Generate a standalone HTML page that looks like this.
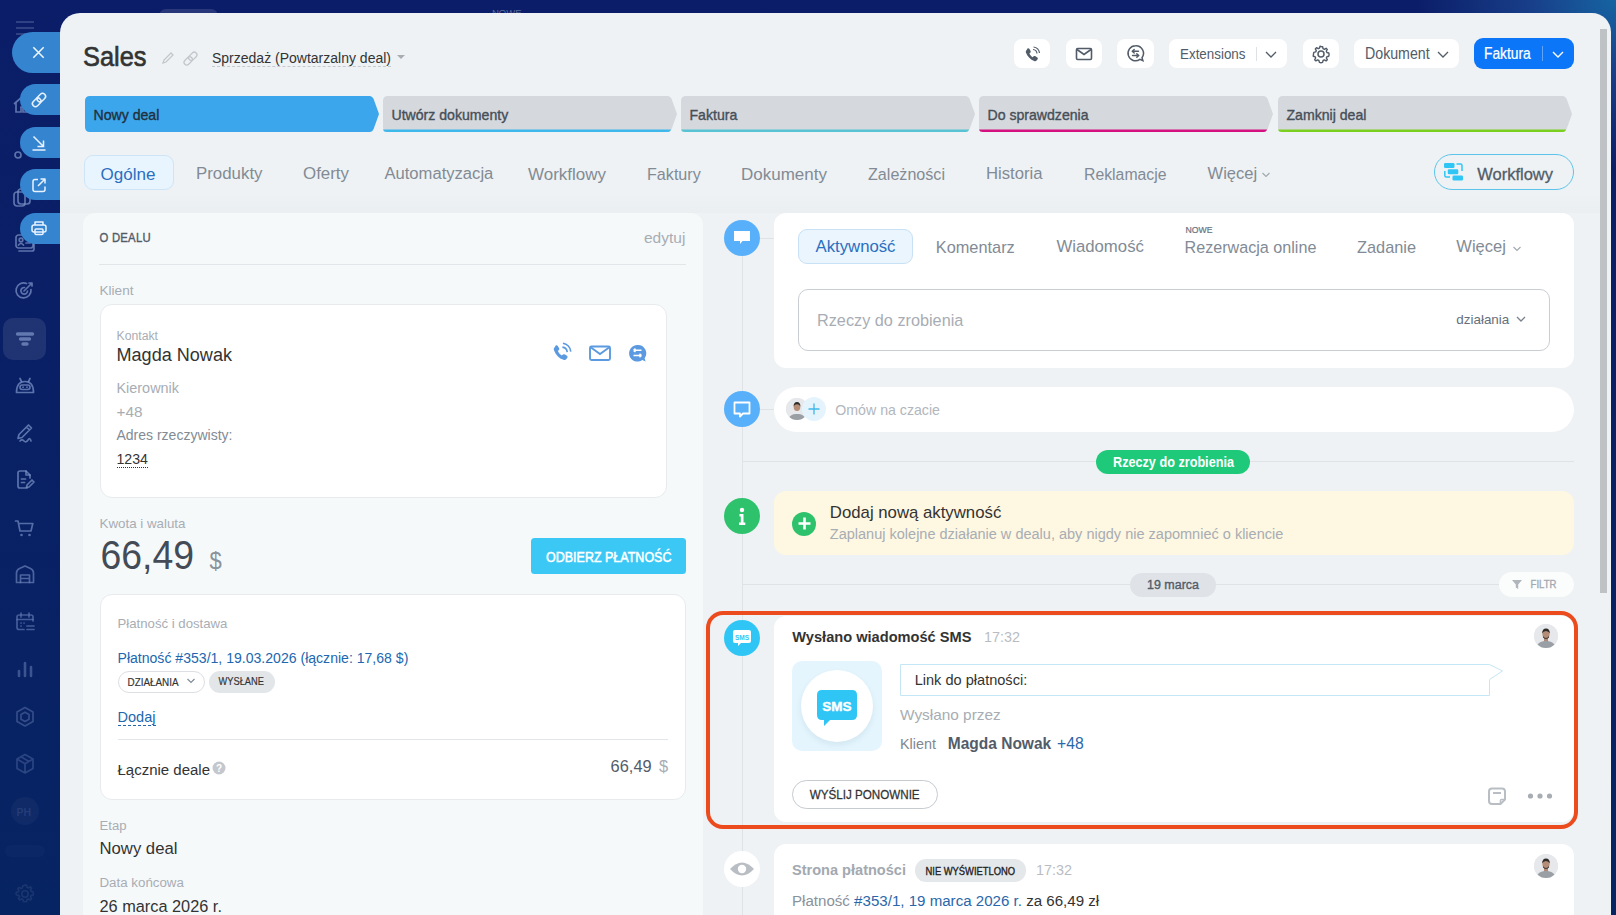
<!DOCTYPE html>
<html><head><meta charset="utf-8"><style>
*{box-sizing:border-box;margin:0;padding:0}
html,body{width:1616px;height:915px;overflow:hidden}
body{position:relative;font-family:"Liberation Sans",sans-serif;background:radial-gradient(ellipse 200px 170px at 1616px 0px,#1664a2 0%,#183d88 45%,rgba(20,40,120,0) 100%),linear-gradient(180deg,#0b1d68 0%,#072462 100%)}
.t{position:absolute;white-space:pre;line-height:1}
.r{position:absolute}
</style></head><body>

<svg class="r" style="left:12px;top:18px;" width="28" height="20" viewBox="0 0 28 20"><g stroke="rgba(150,170,210,0.35)" stroke-width="1.6"><path d="M4 4H22M4 10H22M4 16H22"/></g></svg>
<div class="r" style="left:3px;top:318px;width:43px;height:42px;background:rgba(255,255,255,0.09);border-radius:10px"></div>
<svg class="r" style="left:12px;top:230px;opacity:1" width="26" height="26" viewBox="0 0 26 26"><rect x="4" y="5" width="17" height="13" rx="2.5" fill="none" stroke="rgba(125,148,200,0.72)" stroke-width="1.7" stroke-linecap="round" stroke-linejoin="round"/><path d="M7 21h13q2 0 2-2V9" fill="none" stroke="rgba(125,148,200,0.72)" stroke-width="1.7" stroke-linecap="round" stroke-linejoin="round"/><circle cx="9" cy="10" r="1.8" fill="none" stroke="rgba(125,148,200,0.72)" stroke-width="1.7" stroke-linecap="round" stroke-linejoin="round"/><path d="M6.5 15q2.5-3 5 0M14 9.5h4M14 13h4" fill="none" stroke="rgba(125,148,200,0.72)" stroke-width="1.7" stroke-linecap="round" stroke-linejoin="round"/></svg>
<svg class="r" style="left:12px;top:278px;opacity:1" width="26" height="26" viewBox="0 0 26 26"><path d="M19 11.5A7.5 7.5 0 1 1 14.5 5.5" fill="none" stroke="rgba(125,148,200,0.72)" stroke-width="1.7" stroke-linecap="round" stroke-linejoin="round"/><path d="M15.5 13A3.3 3.3 0 1 1 12.5 9.5" fill="none" stroke="rgba(125,148,200,0.72)" stroke-width="1.7" stroke-linecap="round" stroke-linejoin="round"/><path d="M12 13l8-8M17 5h3v3" fill="none" stroke="rgba(125,148,200,0.72)" stroke-width="1.7" stroke-linecap="round" stroke-linejoin="round"/></svg>
<svg class="r" style="left:12px;top:326px;opacity:1" width="26" height="26" viewBox="0 0 26 26"><path d="M5.5 8H20.5M8.5 13H17.5M11 18H15" stroke="rgba(125,148,200,0.72)" stroke-width="3.4" stroke-linecap="round"/></svg>
<svg class="r" style="left:12px;top:373px;opacity:1" width="26" height="26" viewBox="0 0 26 26"><path d="M4.5 19.5q0-11 8.5-11t8.5 11z" fill="none" stroke="rgba(125,148,200,0.72)" stroke-width="1.7" stroke-linecap="round" stroke-linejoin="round"/><rect x="8" y="12" width="10" height="4.5" rx="2.2" fill="none" stroke="rgba(125,148,200,0.72)" stroke-width="1.7" stroke-linecap="round" stroke-linejoin="round"/><path d="M8 5.5l1.5 3M18 5.5l-1.5 3" fill="none" stroke="rgba(125,148,200,0.72)" stroke-width="1.7" stroke-linecap="round" stroke-linejoin="round"/><path d="M11 14.2h.1M15 14.2h.1" fill="none" stroke="rgba(125,148,200,0.72)" stroke-width="1.7" stroke-linecap="round" stroke-linejoin="round"/></svg>
<svg class="r" style="left:12px;top:420px;opacity:1" width="26" height="26" viewBox="0 0 26 26"><path d="M6 18.5l1-4L16.5 5l3 3L10 17.5z M14.5 7l3 3" fill="none" stroke="rgba(125,148,200,0.72)" stroke-width="1.7" stroke-linecap="round" stroke-linejoin="round"/><path d="M8 21q2-2 4 0t4-1 3 1" fill="none" stroke="rgba(125,148,200,0.72)" stroke-width="1.7" stroke-linecap="round" stroke-linejoin="round"/></svg>
<svg class="r" style="left:12px;top:467px;opacity:1" width="26" height="26" viewBox="0 0 26 26"><path d="M15 21H8q-2 0-2-2V6q0-2 2-2h6l4 4v3" fill="none" stroke="rgba(125,148,200,0.72)" stroke-width="1.7" stroke-linecap="round" stroke-linejoin="round"/><path d="M14 4v4h4M9.5 12h4M9.5 15.5h3M14.5 20.5l.5-2.5 5-5 2 2-5 5z" fill="none" stroke="rgba(125,148,200,0.72)" stroke-width="1.7" stroke-linecap="round" stroke-linejoin="round"/></svg>
<svg class="r" style="left:12px;top:515px;opacity:0.92" width="26" height="26" viewBox="0 0 26 26"><path d="M3.5 6h2.5l2 10h11l1.8-7.5H7" fill="none" stroke="rgba(125,148,200,0.72)" stroke-width="1.7" stroke-linecap="round" stroke-linejoin="round"/><circle cx="9.5" cy="20" r="1.3" fill="rgba(125,148,200,0.72)"/><circle cx="17.5" cy="20" r="1.3" fill="rgba(125,148,200,0.72)"/></svg>
<svg class="r" style="left:12px;top:562px;opacity:0.82" width="26" height="26" viewBox="0 0 26 26"><path d="M4.5 20.5V11q0-3 3-4.5L13 4l5.5 2.5q3 1.5 3 4.5v9.5z" fill="none" stroke="rgba(125,148,200,0.72)" stroke-width="1.7" stroke-linecap="round" stroke-linejoin="round"/><path d="M8.5 20.5V13h9v7.5M8.5 16.5h9" fill="none" stroke="rgba(125,148,200,0.72)" stroke-width="1.7" stroke-linecap="round" stroke-linejoin="round"/></svg>
<svg class="r" style="left:12px;top:609px;opacity:0.72" width="26" height="26" viewBox="0 0 26 26"><path d="M12 20.5H7q-2 0-2-2V8q0-2 2-2h12q2 0 2 2v4" fill="none" stroke="rgba(125,148,200,0.72)" stroke-width="1.7" stroke-linecap="round" stroke-linejoin="round"/><path d="M9 4v4M17 4v4M5 10.5h16M9 14h.1M12 14h.1M9 17h.1M15 17h7M15 20.5h7" fill="none" stroke="rgba(125,148,200,0.72)" stroke-width="1.7" stroke-linecap="round" stroke-linejoin="round"/></svg>
<svg class="r" style="left:12px;top:656px;opacity:0.62" width="26" height="26" viewBox="0 0 26 26"><path d="M7 20v-5M13 20V7M19 20v-9" stroke="rgba(125,148,200,0.72)" stroke-width="2.6" stroke-linecap="round"/></svg>
<svg class="r" style="left:12px;top:704px;opacity:0.52" width="26" height="26" viewBox="0 0 26 26"><path d="M13 3.5l8 4.6v9.3L13 22l-8-4.6V8.1z" fill="none" stroke="rgba(125,148,200,0.72)" stroke-width="1.7" stroke-linecap="round" stroke-linejoin="round"/><path d="M13 8.2l4 2.3v4.8L13 17.6l-4-2.3v-4.8z" fill="none" stroke="rgba(125,148,200,0.72)" stroke-width="1.7" stroke-linecap="round" stroke-linejoin="round"/></svg>
<svg class="r" style="left:12px;top:751px;opacity:0.42" width="26" height="26" viewBox="0 0 26 26"><path d="M13 3.5l8 4.6v9.3L13 22l-8-4.6V8.1z M5 8.1l8 4.6 8-4.6M13 12.7V22M9 5.8l8 4.6" fill="none" stroke="rgba(125,148,200,0.72)" stroke-width="1.7" stroke-linecap="round" stroke-linejoin="round"/></svg>
<svg class="r" style="left:9px;top:92px;" width="26" height="26" viewBox="0 0 26 26"><path d="M5 12l8-7 8 7M7 10.5V20h5v-5h2v5h5v-9.5" fill="none" stroke="rgba(125,148,200,0.72)" stroke-width="1.7"/></svg>
<svg class="r" style="left:9px;top:138px;" width="26" height="26" viewBox="0 0 26 26"><circle cx="9" cy="17" r="3" fill="none" stroke="rgba(125,148,200,0.72)" stroke-width="1.7"/><path d="M12 10a5 5 0 0 1 9 3" fill="none" stroke="rgba(125,148,200,0.72)" stroke-width="1.7"/></svg>
<svg class="r" style="left:9px;top:185px;" width="26" height="26" viewBox="0 0 26 26"><rect x="5" y="7" width="11" height="14" rx="3" fill="none" stroke="rgba(125,148,200,0.72)" stroke-width="1.7"/><rect x="9" y="4" width="12" height="15" rx="3" fill="none" stroke="rgba(125,148,200,0.72)" stroke-width="1.7"/></svg>
<div class="r" style="left:11px;top:797px;width:28px;height:28px;border-radius:50%;background:rgba(255,255,255,0.035)"></div>
<div class="t" style="left:16.5px;top:806.6px;font-size:10.5px;color:rgba(140,160,200,0.18);font-weight:bold;">PH</div>
<div class="r" style="left:5px;top:845px;width:40px;height:12px;border-radius:6px;background:rgba(255,255,255,0.02)"></div>
<svg class="r" style="left:13px;top:882px;" width="24" height="24" viewBox="0 0 24 24"><path d="M12 3l1.6.3.5 2 1.4.6 1.8-1.1 1.3 1.3-1.1 1.8.6 1.4 2 .5.3 1.6-.3 1.6-2 .5-.6 1.4 1.1 1.8-1.3 1.3-1.8-1.1-1.4.6-.5 2-1.6.3-1.6-.3-.5-2-1.4-.6-1.8 1.1-1.3-1.3 1.1-1.8-.6-1.4-2-.5L3 12l.3-1.6 2-.5.6-1.4-1.1-1.8 1.3-1.3 1.8 1.1 1.4-.6.5-2z" fill="none" stroke="rgba(140,160,200,0.14)" stroke-width="1.6"/><circle cx="12" cy="12" r="3.2" fill="none" stroke="rgba(140,160,200,0.14)" stroke-width="1.6"/></svg>
<div class="t" style="left:492.0px;top:8.0px;font-size:9.5px;color:#5c6d9c;font-weight:normal;">NOWE</div>
<div class="r" style="left:159px;top:9px;width:59px;height:14px;background:rgba(255,255,255,0.12);border-radius:7px"></div>
<div class="r" style="left:60px;top:13px;width:1551px;height:910px;background:#eef2f4;border-radius:20px 19px 0 0"></div>
<div class="r" style="left:1600px;top:29px;width:7px;height:564px;background:#bfc2c4"></div>
<div class="r" style="left:12px;top:32px;width:48px;height:41px;background:#3584d0;border-radius:20.5px 0 0 20.5px"></div>
<svg class="r" style="left:28px;top:42px;" width="21" height="21" viewBox="0 0 21 21"><path d="M5.3 5.3L15.7 15.7M15.7 5.3L5.3 15.7" stroke="#f0f8ff" stroke-width="1.5"/></svg>
<div class="r" style="left:20px;top:84px;width:40px;height:31px;background:#3584d0;border-radius:15.5px 0 0 15.5px"></div>
<div class="r" style="left:20px;top:127px;width:40px;height:31px;background:#3584d0;border-radius:15.5px 0 0 15.5px"></div>
<div class="r" style="left:20px;top:169px;width:40px;height:31px;background:#3584d0;border-radius:15.5px 0 0 15.5px"></div>
<div class="r" style="left:20px;top:213px;width:40px;height:31px;background:#3584d0;border-radius:15.5px 0 0 15.5px"></div>
<svg class="r" style="left:29px;top:90px;" width="20" height="20" viewBox="0 0 20 20"><g fill="none" stroke="#e8f2ff" stroke-width="1.5" transform="rotate(-45 10 10)"><rect x="2" y="7" width="9.5" height="6" rx="3"/><rect x="8.5" y="7" width="9.5" height="6" rx="3"/></g></svg>
<svg class="r" style="left:29px;top:133px;" width="20" height="20" viewBox="0 0 20 20"><g fill="none" stroke="#e8f2ff" stroke-width="1.5"><path d="M4.5 3.5l10 10M14.5 7.5v6h-6"/><path d="M3.5 17h13"/></g></svg>
<svg class="r" style="left:29px;top:175px;" width="20" height="20" viewBox="0 0 20 20"><g fill="none" stroke="#e8f2ff" stroke-width="1.5" stroke-linejoin="round"><path d="M9 4.5H6q-2 0-2 2v8q0 2 2 2h8q2 0 2-2v-3"/><path d="M11.5 4h4.5v4.5M16 4l-7 7"/></g></svg>
<svg class="r" style="left:29px;top:218px;" width="20" height="20" viewBox="0 0 20 20"><g fill="none" stroke="#e8f2ff" stroke-width="1.5" stroke-linejoin="round"><path d="M6 7V4h8v3"/><rect x="3" y="7" width="14" height="7" rx="2"/><rect x="6" y="11" width="8" height="5.5" rx="1"/></g></svg>
<div class="t" style="left:83.0px;top:44.5px;font-size:25.4px;color:#333;font-weight:normal;-webkit-text-stroke:0.6px #333;transform:scaleY(1.1);transform-origin:0 85%">Sales</div>
<svg class="r" style="left:159px;top:49px;" width="18" height="18" viewBox="0 0 18 18"><path d="M4 14l1-3 7-7 2 2-7 7z" fill="none" stroke="#c3c7cc" stroke-width="1.3"/></svg>
<svg class="r" style="left:181px;top:49px;" width="18" height="18" viewBox="0 0 18 18"><g fill="none" stroke="#c3c7cc" stroke-width="1.3" transform="rotate(-45 9.5 9.6)"><rect x="1.5" y="6.9" width="9.5" height="5.4" rx="2.7"/><rect x="8" y="6.9" width="9.5" height="5.4" rx="2.7"/></g></svg>
<div class="t" style="left:212.0px;top:51.3px;font-size:14px;color:#333;font-weight:normal;">Sprzedaż (Powtarzalny deal)</div>
<div class="r" style="left:212px;top:66px;width:179px;height:1px;border-top:1px dashed #c6cacf"></div>
<svg class="r" style="left:396px;top:54px;" width="10" height="6" viewBox="0 0 10 6"><path d="M1 1h8L5 5z" fill="#a8adb4"/></svg>
<div class="r" style="left:1014px;top:39px;width:36px;height:29px;background:#fff;border-radius:8px"></div>
<div class="r" style="left:1066px;top:39px;width:36px;height:29px;background:#fff;border-radius:8px"></div>
<div class="r" style="left:1117px;top:39px;width:37px;height:29px;background:#fff;border-radius:8px"></div>
<div class="r" style="left:1169px;top:39px;width:118px;height:29px;background:#fff;border-radius:8px"></div>
<div class="r" style="left:1303px;top:39px;width:36px;height:29px;background:#fff;border-radius:8px"></div>
<div class="r" style="left:1354px;top:39px;width:105px;height:29px;background:#fff;border-radius:8px"></div>
<svg class="r" style="left:1022px;top:45px;" width="20" height="20" viewBox="0 0 20 20"><path d="M5.5 3.5c.6-.4 1.4-.3 1.8.3l1.3 2.2c.3.6.2 1.3-.3 1.7l-.9.6c.5 1.5 1.8 3.1 3.3 3.9l.7-.8c.4-.5 1.1-.6 1.7-.3l2.2 1.3c.6.4.7 1.2.3 1.8l-.8 1.1c-.6.8-1.7 1.1-2.6.7C8.5 14.5 5.5 11.5 4 7.7c-.4-.9-.1-2 .7-2.6z" fill="#525c69"/><path d="M11 4.5a4.5 4.5 0 0 1 4 4M11.5 2a7 7 0 0 1 6 6" fill="none" stroke="#525c69" stroke-width="1.2"/></svg>
<svg class="r" style="left:1074px;top:44px;" width="20" height="20" viewBox="0 0 20 20"><rect x="2.5" y="4.5" width="15" height="11" rx="1.2" fill="none" stroke="#525c69" stroke-width="1.6"/><path d="M3 5.5l7 5 7-5" fill="none" stroke="#525c69" stroke-width="1.6"/></svg>
<svg class="r" style="left:1125px;top:43px;" width="21" height="21" viewBox="0 0 21 21"><path d="M10.5 2.8a7.5 7.5 0 1 0 4.4 13.6l3 1.3-.9-3A7.5 7.5 0 0 0 10.5 2.8z" fill="none" stroke="#525c69" stroke-width="1.5"/><path d="M7.2 8.3h6.3M7.2 8.3l2-1.8M7.2 8.3l2 1.8M13.8 12.5H7.5M13.8 12.5l-2-1.8M13.8 12.5l-2 1.8" fill="none" stroke="#525c69" stroke-width="1.4" stroke-linecap="round"/></svg>
<div class="t" style="left:1180.0px;top:48.0px;font-size:13.4px;color:#525c69;font-weight:normal;transform:scaleY(1.15);transform-origin:0 85%">Extensions</div>
<div class="r" style="left:1256px;top:47px;width:1px;height:14px;background:#dfe2e5"></div>
<svg class="r" style="left:1264px;top:48px;" width="14" height="12" viewBox="0 0 14 12"><path d="M2 4l5 5 5-5" fill="none" stroke="#525c69" stroke-width="1.3"/></svg>
<svg class="r" style="left:1311px;top:44px;" width="20" height="20" viewBox="0 0 20 20"><path d="M10 2.5l1.6.3.5 1.9 1.3.6 1.7-1 1.2 1.2-1 1.7.6 1.3 1.9.5.3 1.6-.3 1.6-1.9.5-.6 1.3 1 1.7-1.2 1.2-1.7-1-1.3.6-.5 1.9-1.6.3-1.6-.3-.5-1.9-1.3-.6-1.7 1-1.2-1.2 1-1.7-.6-1.3-1.9-.5L2.5 10l.3-1.6 1.9-.5.6-1.3-1-1.7 1.2-1.2 1.7 1 1.3-.6.5-1.9z" fill="none" stroke="#525c69" stroke-width="1.4" stroke-linejoin="round"/><circle cx="10" cy="10" r="3" fill="none" stroke="#525c69" stroke-width="1.5"/></svg>
<div class="t" style="left:1365.0px;top:46.6px;font-size:14.2px;color:#525c69;font-weight:normal;transform:scaleY(1.15);transform-origin:0 85%">Dokument</div>
<svg class="r" style="left:1436px;top:48px;" width="14" height="12" viewBox="0 0 14 12"><path d="M2 4l5 5 5-5" fill="none" stroke="#525c69" stroke-width="1.3"/></svg>
<div class="r" style="left:1474px;top:38px;width:100px;height:31px;background:#0b76f7;border-radius:9px"></div>
<div class="t" style="left:1484.0px;top:47.6px;font-size:13.8px;color:#fff;font-weight:normal;-webkit-text-stroke:0.2px #fff;transform:scaleY(1.15);transform-origin:0 85%">Faktura</div>
<div class="r" style="left:1542px;top:46px;width:1px;height:15px;background:rgba(255,255,255,0.35)"></div>
<svg class="r" style="left:1551px;top:48px;" width="14" height="12" viewBox="0 0 14 12"><path d="M2 4l5 5 5-5" fill="none" stroke="#fff" stroke-width="1.4"/></svg>
<svg class="r" style="left:85px;top:96px;" width="294" height="36" viewBox="0 0 294 36"><path d="M0 5Q0 0 5 0H284.5Q287.5 0 288.8 3.5L294 18L288.8 32.5Q287.5 36 284.5 36H5Q0 36 0 31z" fill="#3ba6ec"/></svg>
<div class="t" style="left:93.5px;top:108.4px;font-size:14.1px;color:#22303e;font-weight:normal;-webkit-text-stroke:0.35px #22303e;">Nowy deal</div>
<svg class="r" style="left:383px;top:96px;" width="294" height="36" viewBox="0 0 294 36"><path d="M0 5Q0 0 5 0H284.5Q287.5 0 288.8 3.5L294 18L288.8 32.5Q287.5 36 284.5 36H5Q0 36 0 31z" fill="#d5d8dc"/><path d="M0 33.5H288L287.5 34.5Q286.5 36 284.5 36H4Q0.5 36 0 33.5z" fill="#3fb8ec"/></svg>
<div class="t" style="left:391.5px;top:108.4px;font-size:14.1px;color:#464e58;font-weight:normal;-webkit-text-stroke:0.35px #464e58;">Utwórz dokumenty</div>
<svg class="r" style="left:681px;top:96px;" width="294" height="36" viewBox="0 0 294 36"><path d="M0 5Q0 0 5 0H284.5Q287.5 0 288.8 3.5L294 18L288.8 32.5Q287.5 36 284.5 36H5Q0 36 0 31z" fill="#d5d8dc"/><path d="M0 33.5H288L287.5 34.5Q286.5 36 284.5 36H4Q0.5 36 0 33.5z" fill="#58c4d3"/></svg>
<div class="t" style="left:689.5px;top:108.4px;font-size:14.1px;color:#464e58;font-weight:normal;-webkit-text-stroke:0.35px #464e58;">Faktura</div>
<svg class="r" style="left:979px;top:96px;" width="294" height="36" viewBox="0 0 294 36"><path d="M0 5Q0 0 5 0H284.5Q287.5 0 288.8 3.5L294 18L288.8 32.5Q287.5 36 284.5 36H5Q0 36 0 31z" fill="#d5d8dc"/><path d="M0 33.5H288L287.5 34.5Q286.5 36 284.5 36H4Q0.5 36 0 33.5z" fill="#d5107f"/></svg>
<div class="t" style="left:987.5px;top:108.4px;font-size:14.1px;color:#464e58;font-weight:normal;-webkit-text-stroke:0.35px #464e58;">Do sprawdzenia</div>
<svg class="r" style="left:1278px;top:96px;" width="294" height="36" viewBox="0 0 294 36"><path d="M0 5Q0 0 5 0H284.5Q287.5 0 288.8 3.5L294 18L288.8 32.5Q287.5 36 284.5 36H5Q0 36 0 31z" fill="#d5d8dc"/><path d="M0 33.5H288L287.5 34.5Q286.5 36 284.5 36H4Q0.5 36 0 33.5z" fill="#7bcf1f"/></svg>
<div class="t" style="left:1286.5px;top:108.4px;font-size:14.1px;color:#464e58;font-weight:normal;-webkit-text-stroke:0.35px #464e58;">Zamknij deal</div>
<div class="r" style="left:83.5px;top:154.5px;width:90px;height:35px;background:#e9f5fe;border:1px solid #cde5f7;border-radius:9px"></div>
<div class="t" style="left:100.5px;top:165.6px;font-size:17.06px;color:#2a6fc0;font-weight:normal;">Ogólne</div>
<div class="t" style="left:196.0px;top:165.7px;font-size:16.88px;color:#828b95;font-weight:normal;">Produkty</div>
<div class="t" style="left:303.0px;top:165.7px;font-size:16.9px;color:#828b95;font-weight:normal;">Oferty</div>
<div class="t" style="left:384.4px;top:165.9px;font-size:16.62px;color:#828b95;font-weight:normal;">Automatyzacja</div>
<div class="t" style="left:528.0px;top:165.6px;font-size:16.98px;color:#828b95;font-weight:normal;">Workflowy</div>
<div class="t" style="left:647.0px;top:166.3px;font-size:16.14px;color:#828b95;font-weight:normal;">Faktury</div>
<div class="t" style="left:741.0px;top:165.6px;font-size:17.0px;color:#828b95;font-weight:normal;">Dokumenty</div>
<div class="t" style="left:868.0px;top:166.4px;font-size:16.11px;color:#828b95;font-weight:normal;">Zależności</div>
<div class="t" style="left:986.0px;top:165.9px;font-size:16.7px;color:#828b95;font-weight:normal;">Historia</div>
<div class="t" style="left:1084.0px;top:166.6px;font-size:15.81px;color:#828b95;font-weight:normal;">Reklamacje</div>
<div class="t" style="left:1207.6px;top:166.0px;font-size:16.53px;color:#828b95;font-weight:normal;">Więcej</div>
<svg class="r" style="left:1261px;top:170.5px;" width="10" height="8" viewBox="0 0 10 8"><path d="M1.5 2l3.5 3.5L8.5 2" fill="none" stroke="#a0a7af" stroke-width="1.1"/></svg>
<div class="r" style="left:1434px;top:154px;width:140px;height:36px;border:1.3px solid #5cc4ea;border-radius:18px"></div>
<svg class="r" style="left:1443px;top:162px;" width="22" height="20" viewBox="0 0 22 20"><g fill="#2fc6f6"><rect x="1" y="1" width="10.5" height="5" rx="1.3"/><rect x="4.8" y="7.3" width="10.5" height="5" rx="1.3"/><rect x="9.5" y="13.5" width="10.5" height="5" rx="1.3"/></g><path d="M13.5 2h4q1.5 0 1.5 1.5V9M1.8 9v4.5q0 1.5 1.5 1.5H7" fill="none" stroke="#2fc6f6" stroke-width="1.5"/></svg>
<div class="t" style="left:1477.2px;top:165.5px;font-size:16.5px;color:#525c69;font-weight:normal;-webkit-text-stroke:0.3px #525c69;">Workflowy</div>
<div class="r" style="left:60px;top:192px;width:1540px;height:21px;background:linear-gradient(rgba(0,20,40,0),rgba(0,20,40,0.016))"></div>
<div class="r" style="left:83px;top:213px;width:620px;height:720px;background:#f6f9fa;border-radius:12px"></div>
<div class="t" style="left:99.5px;top:233.1px;font-size:11.3px;color:#525c69;font-weight:normal;-webkit-text-stroke:0.35px #525c69;letter-spacing:0.25px;transform:scaleY(1.08);transform-origin:0 85%">O DEALU</div>
<div class="t" style="left:644.0px;top:230.3px;font-size:15.5px;color:#a8adb4;font-weight:normal;">edytuj</div>
<div class="r" style="left:99px;top:264px;width:587px;height:1px;background:#e3e6e9"></div>
<div class="t" style="left:99.5px;top:283.7px;font-size:13.6px;color:#a8adb4;font-weight:normal;">Klient</div>
<div class="r" style="left:100px;top:303.5px;width:567px;height:194px;background:#fff;border:1px solid #e8ebee;border-radius:12px"></div>
<div class="t" style="left:116.5px;top:330.1px;font-size:12.24px;color:#a8adb4;font-weight:normal;">Kontakt</div>
<div class="t" style="left:116.5px;top:346.0px;font-size:18.07px;color:#333;font-weight:normal;">Magda Nowak</div>
<svg class="r" style="left:550px;top:341px;" width="24" height="24" viewBox="0 0 24 24"><g transform="translate(-0.5,0) scale(1.12)"><path d="M5.5 4c.6-.4 1.4-.3 1.8.3l1.3 2.2c.3.6.2 1.3-.3 1.7l-.9.6c.5 1.6 2 3.4 3.6 4.2l.7-.8c.4-.5 1.1-.6 1.7-.3l2.2 1.3c.6.4.7 1.2.3 1.8l-.8 1.1c-.6.8-1.7 1.1-2.6.7C8.5 15.5 5.5 12.5 4 8.2c-.4-.9-.1-2 .7-2.6z" fill="#5b9ae0"/><path d="M11.5 5.5a5 5 0 0 1 4.3 4.5M12 2a8.5 8.5 0 0 1 7 7.5" fill="none" stroke="#5b9ae0" stroke-width="1.5"/></g></svg>
<svg class="r" style="left:588px;top:344px;" width="24" height="20" viewBox="0 0 24 20"><rect x="2" y="2.5" width="20" height="13.5" rx="1.5" fill="none" stroke="#5b9ae0" stroke-width="1.9"/><path d="M3 3.5l9 6.5 9-6.5" fill="none" stroke="#5b9ae0" stroke-width="1.9"/></svg>
<svg class="r" style="left:627px;top:343px;" width="21" height="21" viewBox="0 0 21 21"><path d="M10.3 2a8.3 8.3 0 1 0 5 15l3.3 1.5-1-3.3A8.3 8.3 0 0 0 10.3 2z" fill="#5b9ae0"/><path d="M6.5 7.3h8M6.5 7.3l2-1.6M6.5 7.3l2 1.6M14.5 12.5h-8M14.5 12.5l-2-1.6M14.5 12.5l-2 1.6" fill="none" stroke="#fff" stroke-width="1.5"/></svg>
<div class="t" style="left:116.5px;top:381.0px;font-size:14.42px;color:#a8adb4;font-weight:normal;">Kierownik</div>
<div class="t" style="left:116.5px;top:404.0px;font-size:15.3px;color:#a8adb4;font-weight:normal;">+48</div>
<div class="t" style="left:116.5px;top:427.6px;font-size:14.01px;color:#828b95;font-weight:normal;">Adres rzeczywisty:</div>
<div class="t" style="left:116.5px;top:452.0px;font-size:14.16px;color:#333;font-weight:normal;">1234</div>
<div class="r" style="left:117px;top:467px;width:31px;height:1px;border-top:1px dotted #333"></div>
<div class="t" style="left:99.5px;top:516.7px;font-size:13.34px;color:#a8adb4;font-weight:normal;">Kwota i waluta</div>
<div class="t" style="left:100.5px;top:538.3px;font-size:37.4px;color:#434b57;font-weight:normal;transform:scaleY(1.08);transform-origin:0 85%">66,49</div>
<div class="t" style="left:209.5px;top:551.4px;font-size:22px;color:#8a929b;font-weight:normal;transform:scaleY(1.1);transform-origin:0 85%">$</div>
<div class="r" style="left:531px;top:538px;width:155px;height:35.5px;background:#3bc8f5;border-radius:3.5px"></div>
<div class="t" style="left:546.0px;top:552.4px;font-size:12.5px;color:#fff;font-weight:normal;-webkit-text-stroke:0.45px #fff;transform:scaleY(1.1);transform-origin:0 85%">ODBIERZ PŁATNOŚĆ</div>
<div class="r" style="left:99.5px;top:594px;width:586px;height:205.5px;background:#fff;border:1px solid #e8ebee;border-radius:12px"></div>
<div class="t" style="left:117.5px;top:617.1px;font-size:13.19px;color:#a8adb4;font-weight:normal;">Płatność i dostawa</div>
<div class="t" style="left:117.5px;top:650.5px;font-size:14.07px;color:#2067b0;font-weight:normal;">Płatność #353/1, 19.03.2026 (łącznie: 17,68 $)</div>
<div class="r" style="left:117.5px;top:670.5px;width:87px;height:22px;border:1px solid #dcdfe3;border-radius:11px;background:#fff"></div>
<div class="t" style="left:127.5px;top:677.9px;font-size:9.9px;color:#333;font-weight:normal;-webkit-text-stroke:0.15px #333;transform:scaleY(1.08);transform-origin:0 85%">DZIAŁANIA</div>
<svg class="r" style="left:186px;top:677px;" width="10" height="8" viewBox="0 0 10 8"><path d="M1.5 2l3.5 3.5L8.5 2" fill="none" stroke="#828b95" stroke-width="1.2"/></svg>
<div class="r" style="left:209px;top:670.5px;width:66px;height:22px;background:#e3e6e9;border-radius:11px"></div>
<div class="t" style="left:218.5px;top:678.4px;font-size:9.3px;color:#333;font-weight:normal;-webkit-text-stroke:0.15px #333;transform:scaleY(1.1);transform-origin:0 85%">WYSŁANE</div>
<div class="t" style="left:117.5px;top:709.7px;font-size:14.54px;color:#2067b0;font-weight:normal;">Dodaj</div>
<div class="r" style="left:117.5px;top:725px;width:38px;height:1px;border-top:1px dashed #2067b0"></div>
<div class="r" style="left:117.5px;top:739px;width:550px;height:1px;background:#e3e6e9"></div>
<div class="t" style="left:117.5px;top:761.7px;font-size:14.99px;color:#333;font-weight:normal;">Łącznie deale</div>
<svg class="r" style="left:212px;top:761px;" width="14" height="14" viewBox="0 0 14 14"><circle cx="7" cy="7" r="6.5" fill="#c4c8cd"/><text x="7" y="10.8" font-size="10" font-family="Liberation Sans" font-weight="bold" fill="#fff" text-anchor="middle">?</text></svg>
<div class="t" style="left:610.6px;top:758.1px;font-size:16.4px;color:#535c69;font-weight:normal;">66,49</div>
<div class="t" style="left:659.0px;top:758.1px;font-size:16.4px;color:#a8adb4;font-weight:normal;">$</div>
<div class="t" style="left:99.5px;top:818.6px;font-size:13.12px;color:#a8adb4;font-weight:normal;">Etap</div>
<div class="t" style="left:99.5px;top:840.5px;font-size:16.71px;color:#333;font-weight:normal;">Nowy deal</div>
<div class="t" style="left:99.5px;top:875.5px;font-size:13.32px;color:#a8adb4;font-weight:normal;">Data końcowa</div>
<div class="t" style="left:99.5px;top:898.0px;font-size:16.32px;color:#333;font-weight:normal;">26 marca 2026 r.</div>
<div class="r" style="left:741.5px;top:250px;width:1px;height:665px;background:#dfe3e6"></div>
<div class="r" style="left:760px;top:237.5px;width:14px;height:1px;background:#dfe3e6"></div>
<div class="r" style="left:760px;top:409px;width:14px;height:1px;background:#dfe3e6"></div>
<div class="r" style="left:724.0px;top:220.0px;width:36px;height:36px;background:#58b0fb;border-radius:50%"></div>
<svg class="r" style="left:732px;top:229px;" width="20" height="18" viewBox="0 0 20 18"><path d="M2 2h16v10H10.5l-2.5 3v-3H2z" fill="#fff"/></svg>
<div class="r" style="left:774px;top:213px;width:800px;height:155px;background:#fff;border-radius:12px"></div>
<div class="r" style="left:797.5px;top:228.5px;width:115px;height:35px;background:#eaf5fe;border:1px solid #c8e1f5;border-radius:9px"></div>
<div class="t" style="left:815.5px;top:238.8px;font-size:16.74px;color:#2a6fc0;font-weight:normal;">Aktywność</div>
<div class="t" style="left:935.8px;top:239.2px;font-size:16.34px;color:#828b95;font-weight:normal;">Komentarz</div>
<div class="t" style="left:1056.4px;top:238.8px;font-size:16.75px;color:#828b95;font-weight:normal;">Wiadomość</div>
<div class="t" style="left:1185.6px;top:225.7px;font-size:8.68px;color:#6a737f;font-weight:normal;-webkit-text-stroke:0.2px #6a737f;transform:scaleY(1.1);transform-origin:0 85%">NOWE</div>
<div class="t" style="left:1184.5px;top:239.3px;font-size:16.15px;color:#828b95;font-weight:normal;">Rezerwacja online</div>
<div class="t" style="left:1357.0px;top:239.2px;font-size:16.33px;color:#828b95;font-weight:normal;">Zadanie</div>
<div class="t" style="left:1456.3px;top:239.0px;font-size:16.53px;color:#828b95;font-weight:normal;">Więcej</div>
<svg class="r" style="left:1512px;top:244.5px;" width="10" height="8" viewBox="0 0 10 8"><path d="M1.5 2l3.5 3.5L8.5 2" fill="none" stroke="#a0a7af" stroke-width="1.1"/></svg>
<div class="r" style="left:797.5px;top:288.5px;width:752.5px;height:62px;border:1px solid #c9ced3;border-radius:10px"></div>
<div class="t" style="left:817.0px;top:312.2px;font-size:16.26px;color:#a8adb4;font-weight:normal;">Rzeczy do zrobienia</div>
<div class="t" style="left:1456.3px;top:312.6px;font-size:13.43px;color:#666f7a;font-weight:normal;">działania</div>
<svg class="r" style="left:1515px;top:314px;" width="12" height="10" viewBox="0 0 12 10"><path d="M2 3l4 4 4-4" fill="none" stroke="#7a838d" stroke-width="1.3"/></svg>
<div class="r" style="left:724.0px;top:391.0px;width:36px;height:36px;background:#58b0fb;border-radius:50%"></div>
<svg class="r" style="left:732px;top:400px;" width="20" height="19" viewBox="0 0 20 19"><path d="M2.5 2.5h15v11H11l-3 3v-3H2.5z" fill="none" stroke="#fff" stroke-width="1.8" stroke-linejoin="round"/></svg>
<div class="r" style="left:774px;top:386.5px;width:800px;height:45.5px;background:#fff;border-radius:23px"></div>
<div class="r" style="left:786.0px;top:398.0px;width:22px;height:22px;background:#dfe3e6;border-radius:50%"></div>
<svg class="r" style="left:786px;top:398px;" width="22" height="22" viewBox="0 0 22 22"><clipPath id="av0"><circle cx="11" cy="11" r="11"/></clipPath><g clip-path="url(#av0)"><rect width="22" height="22" fill="#e6e8eb"/><path d="M2 24c0-5.5 3.5-8 9-8s9 2.5 9 8z" fill="#9a9fa5"/><ellipse cx="11" cy="9" rx="3.3" ry="4" fill="#b58d76"/><path d="M7.6 8.5q0-4.5 3.4-4.5t3.4 4.5q-1-2.2-3.4-2.2t-3.4 2.2z" fill="#2e2a28"/></g></svg>
<div class="r" style="left:802.0px;top:397.0px;width:24px;height:24px;background:#e5f4fc;border-radius:50%"></div>
<svg class="r" style="left:807px;top:402px;" width="14" height="14" viewBox="0 0 14 14"><path d="M7 1.5v11M1.5 7h11" stroke="#40b6ea" stroke-width="1.3"/></svg>
<div class="t" style="left:835.3px;top:402.5px;font-size:14.16px;color:#b2b7bd;font-weight:normal;">Omów na czacie</div>
<div class="r" style="left:742px;top:461px;width:832px;height:1px;background:#dfe3e6"></div>
<div class="r" style="left:1096px;top:450px;width:154px;height:23.5px;background:#1fc97a;border-radius:12px"></div>
<div class="t" style="left:1113.0px;top:457.1px;font-size:12.66px;color:#fff;font-weight:bold;transform:scaleY(1.1);transform-origin:0 85%">Rzeczy do zrobienia</div>
<div class="r" style="left:724.0px;top:498.0px;width:36px;height:36px;background:#2fc26d;border-radius:50%"></div>
<svg class="r" style="left:732px;top:506px;" width="20" height="20" viewBox="0 0 20 20"><circle cx="10" cy="4" r="2.2" fill="#fff"/><path d="M7.5 8h4v8.5h1.8V19H7v-2.5h1.8V10.5H7.5z" fill="#fff"/></svg>
<div class="r" style="left:774px;top:491px;width:800px;height:64px;background:#fef7e1;border-radius:12px"></div>
<div class="r" style="left:792.0px;top:511.5px;width:24px;height:24px;background:#2fc26d;border-radius:50%"></div>
<svg class="r" style="left:796px;top:515px;" width="17" height="17" viewBox="0 0 17 17"><path d="M8.5 2.5v12M2.5 8.5h12" stroke="#fff" stroke-width="2.6"/></svg>
<div class="t" style="left:829.8px;top:504.8px;font-size:16.77px;color:#333;font-weight:normal;">Dodaj nową aktywność</div>
<div class="t" style="left:829.8px;top:527.2px;font-size:14.53px;color:#a8adb4;font-weight:normal;">Zaplanuj kolejne działanie w dealu, aby nigdy nie zapomnieć o kliencie</div>
<div class="r" style="left:742px;top:583.5px;width:832px;height:1px;background:#dfe3e6"></div>
<div class="r" style="left:1130px;top:572.5px;width:86px;height:24.5px;background:#dfe3e7;border-radius:12px"></div>
<div class="t" style="left:1147.0px;top:579.4px;font-size:12.47px;color:#535c69;font-weight:normal;-webkit-text-stroke:0.35px #535c69;transform:scaleY(1.05);transform-origin:0 85%">19 marca</div>
<div class="r" style="left:1499px;top:572px;width:74.5px;height:25px;background:#fbfcfc;border-radius:12.5px"></div>
<svg class="r" style="left:1510px;top:577px;" width="14" height="14" viewBox="0 0 14 14"><path d="M2 3h10L8.2 7.5V12L5.8 10.5V7.5z" fill="#b1b6bc"/></svg>
<div class="t" style="left:1530.6px;top:580.2px;font-size:9.6px;color:#a3a9b0;font-weight:normal;-webkit-text-stroke:0.3px #a3a9b0;transform:scaleY(1.12);transform-origin:0 85%">FILTR</div>
<div class="r" style="left:774px;top:616px;width:800px;height:206px;background:#fff;border-radius:12px"></div>
<div class="r" style="left:706px;top:610.5px;width:872px;height:218.5px;border:4px solid #ec4b1d;border-radius:17px"></div>
<div class="r" style="left:724.0px;top:620.0px;width:36px;height:36px;background:#2fc6f6;border-radius:50%"></div>
<svg class="r" style="left:730px;top:627px;" width="24" height="22" viewBox="0 0 24 22"><path d="M5 3h14q2 0 2 2v9q0 2-2 2H11l-3 3v-3H5q-2 0-2-2V5q0-2 2-2z" fill="#fff"/><text x="12" y="12.8" font-size="6.5" font-family="Liberation Sans" font-weight="bold" fill="#2fc6f6" text-anchor="middle">SMS</text></svg>
<div class="t" style="left:792.3px;top:629.8px;font-size:14.62px;color:#333;font-weight:bold;transform:scaleY(1.04);transform-origin:0 85%">Wysłano wiadomość SMS</div>
<div class="t" style="left:984.0px;top:630.0px;font-size:14.39px;color:#b9bdc3;font-weight:normal;">17:32</div>
<div class="r" style="left:1534.0px;top:624.0px;width:24px;height:24px;background:#e3e6e9;border-radius:50%"></div>
<svg class="r" style="left:1534px;top:624px;" width="24" height="24" viewBox="0 0 24 24"><clipPath id="av1"><circle cx="12" cy="12" r="12"/></clipPath><g clip-path="url(#av1)"><rect width="24" height="24" fill="#e6e8eb"/><path d="M2 26c0-6 4-9 10-9s10 3 10 9z" fill="#9a9fa5"/><rect x="10" y="13" width="4" height="4" fill="#b08a74"/><ellipse cx="12" cy="10" rx="3.6" ry="4.4" fill="#b58d76"/><path d="M8.2 9.5q0-5 3.8-5t3.8 5q-1-2.5-3.8-2.5t-3.8 2.5z" fill="#2e2a28"/><path d="M9 12q3 4 6 0v1.5q-3 3-6 0z" fill="#4a3e38"/></g></svg>
<div class="r" style="left:792px;top:661px;width:90px;height:90px;background:#e4f5fd;border-radius:10px"></div>
<div class="r" style="left:801px;top:669.5px;width:72px;height:72px;background:#fff;border-radius:50%;box-shadow:0 3px 6px rgba(0,80,120,0.08)"></div>
<svg class="r" style="left:816px;top:689px;" width="42" height="38" viewBox="0 0 42 38"><path d="M6 1h30q5 0 5 5v20q0 5-5 5H14l-6 6v-6H6q-5 0-5-5V6q0-5 5-5z" fill="#2fc6f6"/><text x="21" y="21.5" font-size="13.5" font-family="Liberation Sans" font-weight="bold" fill="#fff" text-anchor="middle" stroke="#fff" stroke-width="0.4">SMS</text></svg>
<svg class="r" style="left:900px;top:664px;" width="605" height="33" viewBox="0 0 605 33"><path d="M0.5 0.5H589.5L602.5 7L589.5 15.5V31.5H0.5z" fill="none" stroke="#c5e6f4" stroke-width="1"/></svg>
<div class="t" style="left:914.7px;top:672.7px;font-size:14.57px;color:#333;font-weight:normal;">Link do płatności:</div>
<div class="t" style="left:900.0px;top:707.0px;font-size:15.38px;color:#a8adb4;font-weight:normal;">Wysłano przez</div>
<div class="t" style="left:900.0px;top:737.3px;font-size:14.39px;color:#7f8790;font-weight:normal;">Klient</div>
<div class="t" style="left:947.8px;top:736.4px;font-size:15.5px;color:#535c69;font-weight:bold;transform:scaleY(1.05);transform-origin:0 85%">Magda Nowak</div>
<div class="t" style="left:1057.0px;top:736.2px;font-size:15.74px;color:#2a67aa;font-weight:normal;">+48</div>
<div class="r" style="left:792px;top:780px;width:146px;height:29px;border:1px solid #c6cbd0;border-radius:15px"></div>
<div class="t" style="left:809.7px;top:789.1px;font-size:11.65px;color:#333;font-weight:normal;-webkit-text-stroke:0.25px #333;transform:scaleY(1.08);transform-origin:0 85%">WYŚLIJ PONOWNIE</div>
<svg class="r" style="left:1487px;top:786px;" width="21" height="21" viewBox="0 0 21 21"><path d="M5 2.5h10q3 0 3 3v8l-4.5 4.5H5q-3 0-3-3V5.5q0-3 3-3z" fill="none" stroke="#b9bec4" stroke-width="2" stroke-linejoin="round"/><path d="M6 7h8" stroke="#b9bec4" stroke-width="2"/><path d="M13.5 18v-3.5q0-1 1-1H18" fill="none" stroke="#b9bec4" stroke-width="1.6"/></svg>
<svg class="r" style="left:1526px;top:790px;" width="28" height="12" viewBox="0 0 28 12"><circle cx="4.5" cy="6" r="2.6" fill="#a8adb4"/><circle cx="14" cy="6" r="2.6" fill="#a8adb4"/><circle cx="23.5" cy="6" r="2.6" fill="#a8adb4"/></svg>
<div class="r" style="left:724.0px;top:850.5px;width:36px;height:36px;background:#fff;border-radius:50%"></div>
<svg class="r" style="left:728px;top:859px;" width="28" height="20" viewBox="0 0 28 20"><path d="M2 10Q14 -3 26 10Q14 23 2 10z" fill="#b9bec4"/><circle cx="14" cy="10" r="4.2" fill="#fff"/></svg>
<div class="r" style="left:774px;top:844px;width:800px;height:80px;background:#fff;border-radius:12px"></div>
<div class="t" style="left:792.0px;top:862.7px;font-size:14.55px;color:#a3a9b0;font-weight:bold;transform:scaleY(1.05);transform-origin:0 85%">Strona płatności</div>
<div class="r" style="left:915px;top:859.3px;width:111px;height:22.5px;background:#e5e8eb;border-radius:11px"></div>
<div class="t" style="left:925.5px;top:867.0px;font-size:9.4px;color:#222;font-weight:normal;-webkit-text-stroke:0.3px #222;transform:scaleY(1.08);transform-origin:0 85%">NIE WYŚWIETLONO</div>
<div class="t" style="left:1036.0px;top:862.8px;font-size:14.39px;color:#b9bdc3;font-weight:normal;">17:32</div>
<div class="r" style="left:1534.0px;top:854.0px;width:24px;height:24px;background:#e3e6e9;border-radius:50%"></div>
<svg class="r" style="left:1534px;top:854px;" width="24" height="24" viewBox="0 0 24 24"><clipPath id="av2"><circle cx="12" cy="12" r="12"/></clipPath><g clip-path="url(#av2)"><rect width="24" height="24" fill="#e6e8eb"/><path d="M2 26c0-6 4-9 10-9s10 3 10 9z" fill="#9a9fa5"/><rect x="10" y="13" width="4" height="4" fill="#b08a74"/><ellipse cx="12" cy="10" rx="3.6" ry="4.4" fill="#b58d76"/><path d="M8.2 9.5q0-5 3.8-5t3.8 5q-1-2.5-3.8-2.5t-3.8 2.5z" fill="#2e2a28"/><path d="M9 12q3 4 6 0v1.5q-3 3-6 0z" fill="#4a3e38"/></g></svg>
<div class="t" style="left:792.0px;top:892.7px;font-size:15.1px;color:#333;font-weight:normal;"><span style="color:#8a929b">Płatność</span> <span style="color:#2a67aa">#353/1, 19 marca 2026 r.</span> za 66,49 zł</div>
</body></html>
